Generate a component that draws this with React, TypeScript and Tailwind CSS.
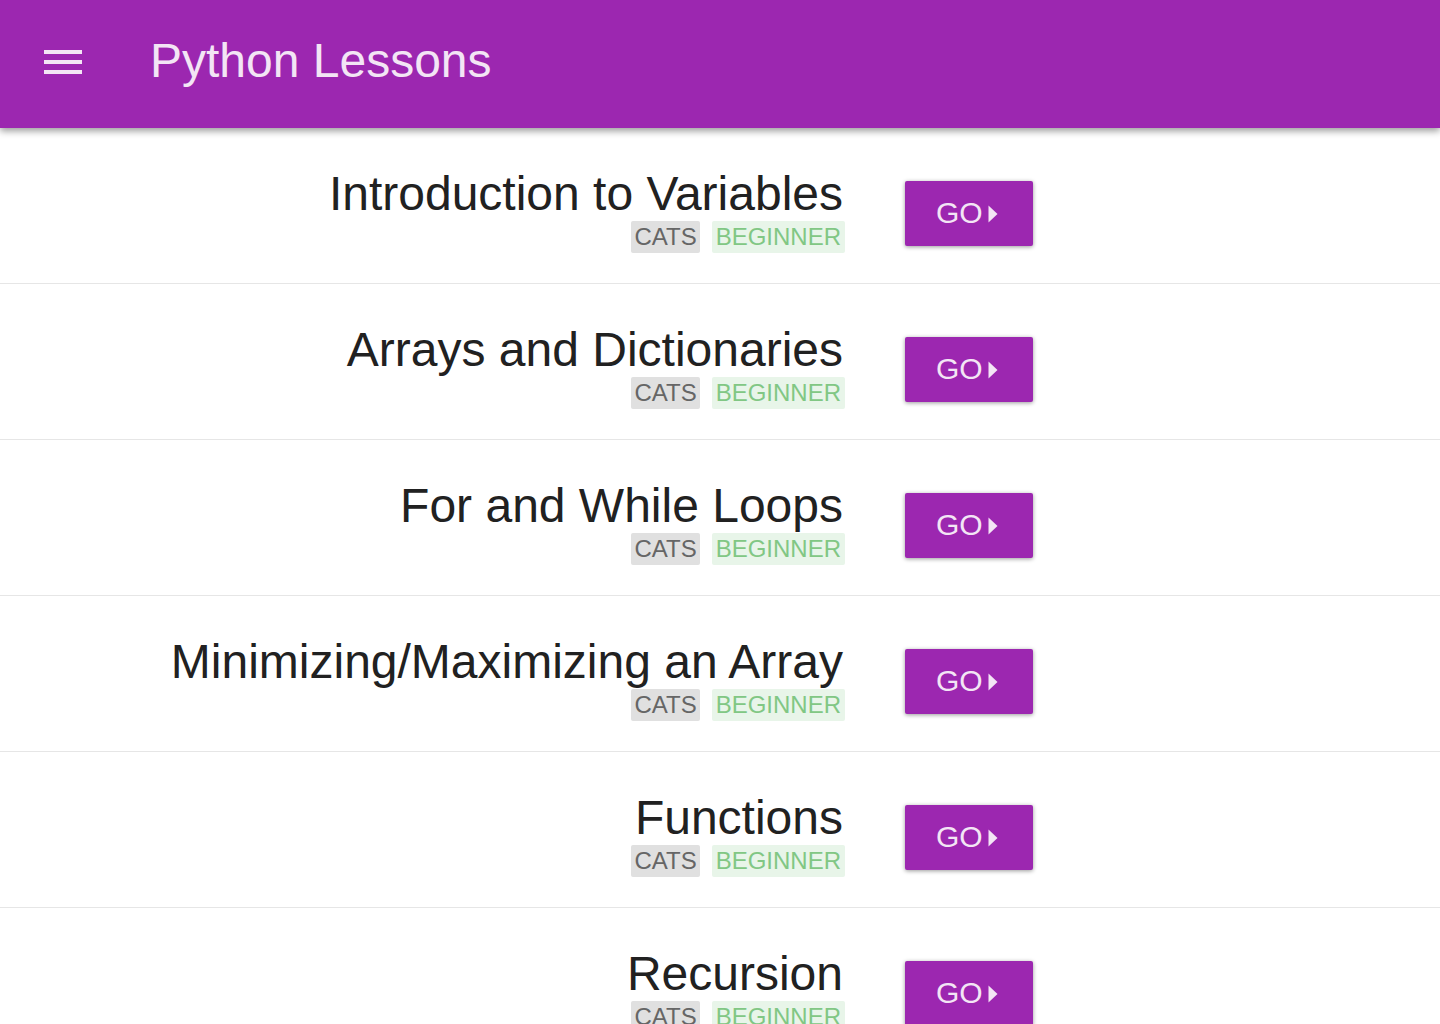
import React from "react";

const lessons = [
  "Introduction to Variables",
  "Arrays and Dictionaries",
  "For and While Loops",
  "Minimizing/Maximizing an Array",
  "Functions",
  "Recursion",
];

export default function App() {
  return (
    <div
      className="w-[1440px] h-[1024px] overflow-hidden bg-white"
      style={{ fontFamily: '"Liberation Sans", Arial, sans-serif' }}
    >
      <header className="relative z-10 h-[128px] bg-[#9c27b0] flex items-center shadow-[0_3px_7px_rgba(0,0,0,0.4)]">
        <div className="w-[150px] flex items-center pl-[44px]">
          <svg width="38" height="26" viewBox="0 0 38 26" className="mt-[-2px]">
            <rect x="0" y="0" width="38" height="4" fill="#f3e5f5" />
            <rect x="0" y="10" width="38" height="4" fill="#f3e5f5" />
            <rect x="0" y="20" width="38" height="4" fill="#f3e5f5" />
          </svg>
        </div>
        <h1 className="text-[48px] leading-none text-[#f3e5f5] mt-[-6px]">Python Lessons</h1>
      </header>
      <main>
        {lessons.map((t) => (
          <div
            key={t}
            className="h-[156px] border-b border-[#e6e6e6] flex items-start"
          >
            <div className="w-[845px] flex flex-col items-end pt-[39px]">
              <div className="text-[48px] leading-[54px] text-[#212121] mr-[2px]">{t}</div>
              <div className="flex gap-[12px]">
                <span className="bg-[#e0e0e0] text-[#666] text-[24px] leading-[32px] px-[3px] rounded-[2px]">
                  CATS
                </span>
                <span className="bg-[#e8f5e9] text-[#81c784] text-[24px] leading-[32px] px-[4px] rounded-[2px]">
                  BEGINNER
                </span>
              </div>
            </div>
            <button className="mt-[53px] ml-[60px] w-[128px] h-[65px] bg-[#9c27b0] rounded-[2px] shadow-[0_1px_4px_rgba(0,0,0,0.4)] flex items-center justify-start pl-[31px] pb-[3px] text-[#f3e5f5] text-[30px]">
              <span>GO</span>
              <svg width="10" height="18" viewBox="0 0 10 18" className="ml-[5px] translate-y-[2px]">
                <path d="M0.5 0.5 L9.5 9 L0.5 17.5 Z" fill="#f3e5f5" />
              </svg>
            </button>
          </div>
        ))}
      </main>
    </div>
  );
}
